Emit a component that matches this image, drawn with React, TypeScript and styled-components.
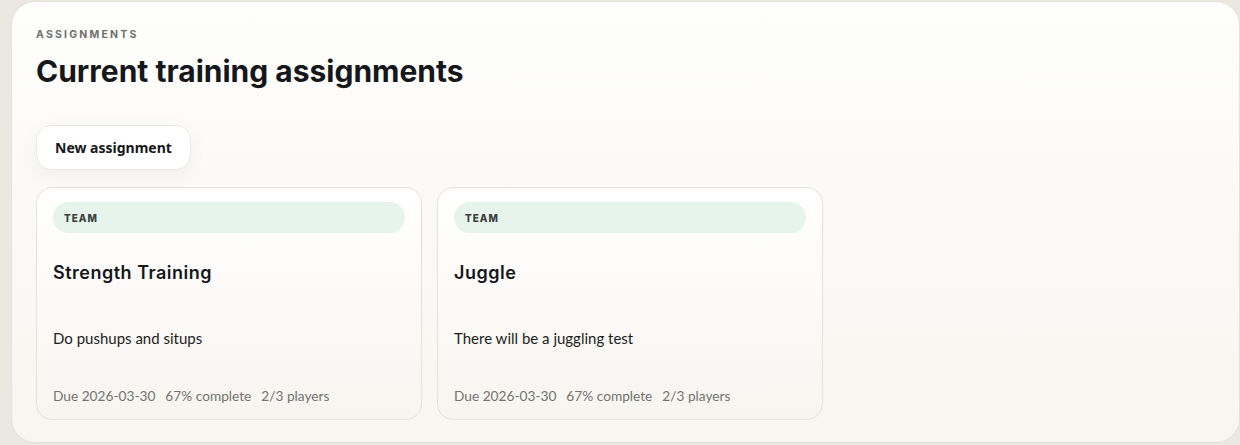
import React from "react";
import styled, { createGlobalStyle } from "styled-components";

const Global = createGlobalStyle`
  html, body { margin: 0; padding: 0; background: #ebe8e1; }
  body { font-family: "Lato", "Noto Sans", sans-serif; }
  * { box-sizing: border-box; }
`;

const Page = styled.div`
  width: 1240px;
  height: 445px;
  padding: 1px 0 2px 11px;
  overflow: hidden;
`;

const Panel = styled.section`
  height: 442px;
  width: 1229px;
  border-radius: 24px;
  border: 1px solid #e4e1d9;
  background: linear-gradient(180deg, #fefefd 0%, #fbfaf7 40%, #f8f6f1 100%);
  padding: 26px 24px 0 24px;
  display: flex;
  flex-direction: column;
`;

const Eyebrow = styled.div`
  font-family: "Inter", sans-serif;
  font-size: 10.5px;
  font-weight: 700;
  letter-spacing: 2.2px;
  color: #6f6f6b;
  text-transform: uppercase;
  line-height: 13px;
`;

const Title = styled.h1`
  margin: 10px 0 0 0;
  font-family: "Inter", sans-serif;
  font-size: 30px;
  font-weight: 700;
  letter-spacing: 0px;
  color: #15171a;
  line-height: 40px;
`;

const Toolbar = styled.div`
  display: flex;
  margin-top: 34px;
`;

const Button = styled.button`
  height: 45px;
  padding: 0 18px;
  border-radius: 15px;
  border: 1px solid #ece9e2;
  background: #ffffff;
  box-shadow: 0 6px 16px rgba(120, 110, 90, 0.08);
  font-family: "Noto Sans", sans-serif;
  font-size: 14px;
  font-weight: 700;
  color: #16181b;
  cursor: pointer;
`;

const Grid = styled.div`
  display: grid;
  grid-template-columns: repeat(2, 386px);
  gap: 15px;
  margin-top: 17px;
`;

const Card = styled.article`
  height: 233px;
  border-radius: 16px;
  border: 1px solid #e4e1d9;
  background: linear-gradient(180deg, #ffffff 0%, #fbfaf8 50%, #f7f5f0 100%);
  padding: 14px 16px 0 16px;
  display: flex;
  flex-direction: column;
`;

const Badge = styled.div`
  height: 31px;
  border-radius: 999px;
  background: #e6f4ec;
  padding: 0 11px;
  display: flex;
  align-items: center;
  font-family: "Inter", sans-serif;
  font-size: 10px;
  font-weight: 800;
  letter-spacing: 1px;
  color: #3c3f3d;
`;

const CardTitle = styled.h2`
  margin: 28px 0 0 0;
  font-family: "Inter", sans-serif;
  font-size: 18px;
  font-weight: 600;
  letter-spacing: 0.5px;
  color: #15171a;
  line-height: 24px;
`;

const Desc = styled.p`
  margin: 43px 0 0 0;
  font-size: 15px;
  color: #1c1e20;
  line-height: 20px;
`;

const Meta = styled.div`
  margin-top: 39px;
  display: flex;
  gap: 10px;
  font-size: 13.7px;
  color: #74736f;
  line-height: 18px;
`;

type Assignment = { title: string; desc: string; due: string; pct: number; done: number; total: number };

const items: Assignment[] = [
  { title: "Strength Training", desc: "Do pushups and situps", due: "2026-03-30", pct: 67, done: 2, total: 3 },
  { title: "Juggle", desc: "There will be a juggling test", due: "2026-03-30", pct: 67, done: 2, total: 3 },
];

export default function App() {
  return (
    <>
      <Global />
      <Page>
        <Panel>
          <Eyebrow>Assignments</Eyebrow>
          <Title>Current training assignments</Title>
          <Toolbar>
            <Button>New assignment</Button>
          </Toolbar>
          <Grid>
            {items.map((a) => (
              <Card key={a.title}>
                <Badge>TEAM</Badge>
                <CardTitle>{a.title}</CardTitle>
                <Desc>{a.desc}</Desc>
                <Meta>
                  <span>Due {a.due}</span>
                  <span>{a.pct}% complete</span>
                  <span>
                    {a.done}/{a.total} players
                  </span>
                </Meta>
              </Card>
            ))}
          </Grid>
        </Panel>
      </Page>
    </>
  );
}
